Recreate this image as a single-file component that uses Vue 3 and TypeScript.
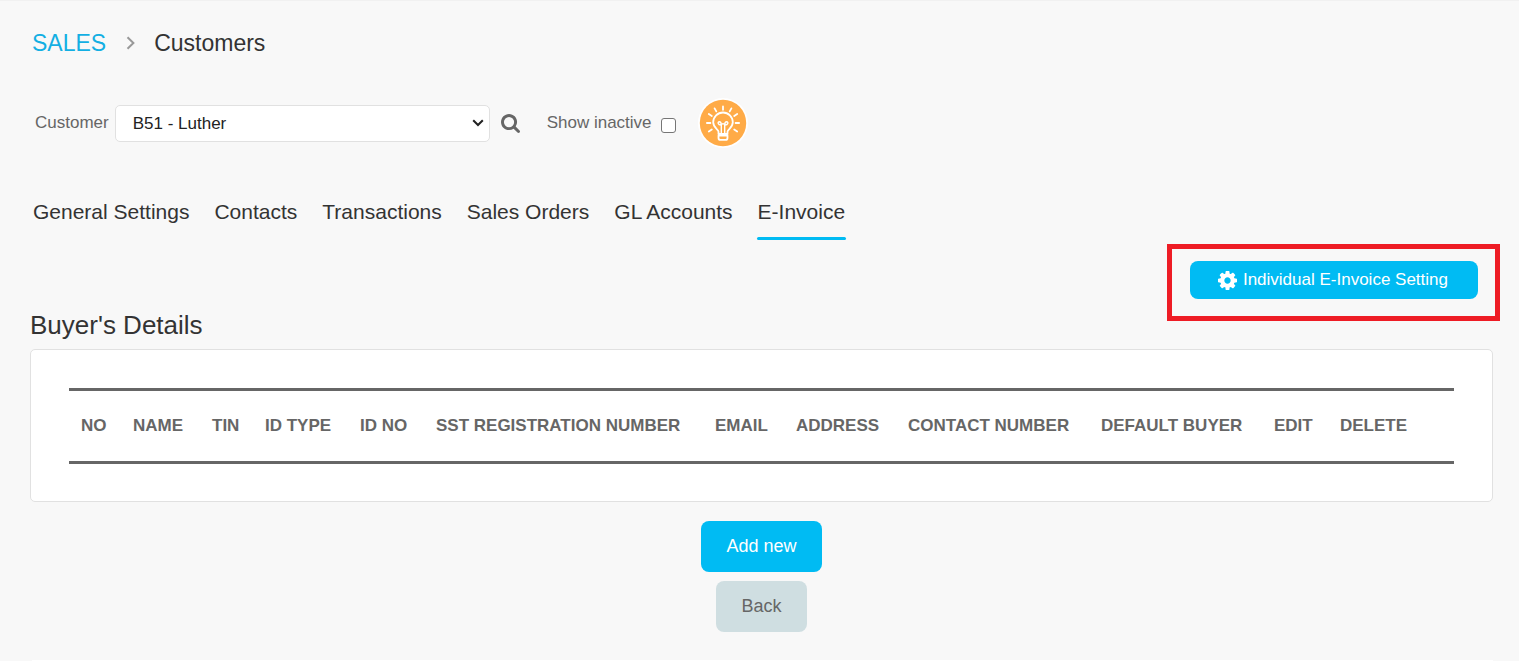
<script setup lang="ts">
import { ref } from 'vue'

interface Column {
  label: string
  width?: number
}

const customer = ref('B51')
const showInactive = ref(false)
const activeTab = ref('E-Invoice')

const tabs: string[] = [
  'General Settings',
  'Contacts',
  'Transactions',
  'Sales Orders',
  'GL Accounts',
  'E-Invoice',
]

const columns: Column[] = [
  { label: 'NO', width: 52 },
  { label: 'NAME', width: 79 },
  { label: 'TIN', width: 53 },
  { label: 'ID TYPE', width: 95 },
  { label: 'ID NO', width: 76 },
  { label: 'SST REGISTRATION NUMBER', width: 279 },
  { label: 'EMAIL', width: 81 },
  { label: 'ADDRESS', width: 112 },
  { label: 'CONTACT NUMBER', width: 193 },
  { label: 'DEFAULT BUYER', width: 173 },
  { label: 'EDIT', width: 66 },
  { label: 'DELETE' },
]
</script>

<template>
  <main class="page">
    <nav class="crumbs" aria-label="Breadcrumb">
      <a href="#">SALES</a>
      <svg class="chevron" viewBox="0 0 10 14" aria-hidden="true">
        <path d="M1.5 1.2 7.4 7l-5.9 5.8" />
      </svg>
      <h1>Customers</h1>
    </nav>

    <form class="filters" @submit.prevent>
      <label for="customer">Customer</label>
      <div class="select-box">
        <select id="customer" v-model="customer">
          <option value="B51">B51 - Luther</option>
        </select>
        <svg class="caret" viewBox="0 0 12 8" aria-hidden="true">
          <path d="M1.2 1.2 6 6l4.800-4.800" />
        </svg>
      </div>
      <button class="icon-button search" type="submit" aria-label="Search">
        <svg viewBox="0 0 1664 1664" aria-hidden="true">
          <path d="M1152 704q0-185-131.500-316.500T704 256 387.500 387.500 256 704t131.500 316.500T704 1152t316.500-131.500T1152 704zm512 832q0 52-38 90t-90 38q-54 0-90-38l-343-342q-179 124-399 124-143 0-273.500-55.500t-225-150-150-225T0 704t55.500-273.500 150-225 225-150T704 0t273.500 55.500 225 150 150 225T1408 704q0 220-124 399l343 343q37 37 37 90z" />
        </svg>
      </button>
      <label class="inactive" for="inactive">Show inactive</label>
      <input id="inactive" v-model="showInactive" type="checkbox" />
      <button class="icon-button tips" type="button" aria-label="Tips">
        <svg viewBox="0 0 50 50" aria-hidden="true">
          <circle cx="25" cy="25" r="25" fill="#fff" />
          <circle cx="25" cy="25" r="23.200" fill="#ffab47" />
          <g fill="none" stroke="#fff" stroke-width="1.800" stroke-linecap="round" stroke-linejoin="round">
            <path d="M20.500 36v-2.300c0-2.200-5.300-4-5.300-9.400a9.800 9.800 0 0 1 19.600 0c0 5.400-5.300 7.200-5.300 9.400V36z" />
            <path d="M20.500 37.500h9v2.400c0 1.300-.8 2-2 2h-5c-1.200 0-2-.7-2-2z" />
            <path d="M23.300 35.500V27M26.700 35.500V27M23.300 27c-3.600.2-3.900-3.200-2-3.200 1.600 0 2 1.500 2 3.200 1-1.800 2.400-1.800 3.400 0 0-1.700.4-3.200 2-3.200 1.900 0 1.600 3.400-2 3.200" stroke-width="1.400" />
            <path d="M25 11.800V8.400M18.300 13.400l-1.700-3M31.700 13.400l1.700-3M13.800 18l-3-2M36.200 18l3-2M12.400 25H8.900M37.600 25h3.500M13.800 31.500l-3 2M36.200 31.500l3 2" />
          </g>
        </svg>
      </button>
    </form>

    <nav class="tabs" aria-label="Customer sections">
      <a
        v-for="tab in tabs"
        :key="tab"
        href="#"
        :class="{ active: tab === activeTab }"
        @click.prevent="activeTab = tab"
      >{{ tab }}</a>
    </nav>

    <div class="actions">
      <div class="highlighted">
        <button class="setting" type="button">
          <svg viewBox="0 0 1536 1536" aria-hidden="true">
            <path d="M1024 768q0-106-75-181t-181-75-181 75-75 181 75 181 181 75 181-75 75-181zm512-109v222q0 12-8 23t-20 13l-185 28q-19 54-39 91 35 50 107 138 10 12 10 25t-9 23q-27 37-99 108t-94 71q-12 0-26-9l-138-108q-44 23-91 38-16 136-29 186-7 28-36 28H657q-14 0-24.500-8.500T621 1506l-28-184q-49-16-90-37l-141 107q-10 9-25 9-14 0-25-11-126-114-165-168-7-10-7-23 0-12 8-23 15-21 51-66.500t54-70.500q-27-50-41-99L29 913q-13-2-21-12.500T0 877V655q0-12 8-23t19-13l186-28q14-46 39-92-40-57-107-138-10-12-10-24 0-10 9-23 26-36 98.500-107.500T337 135q13 0 26 10l138 107q44-23 91-38 16-136 29-186 7-28 36-28h222q14 0 24.500 8.500T915 30l28 184q49 16 90 37l142-107q9-9 24-9 13 0 25 10 129 119 165 170 7 8 7 22 0 12-8 23-15 21-51 66.500t-54 70.500q26 50 41 98l183 28q13 2 21 12.500t8 23.500z" />
          </svg>
          Individual E-Invoice Setting
        </button>
      </div>
    </div>

    <h2>Buyer's Details</h2>
    <section class="card">
      <table>
        <colgroup>
          <col
            v-for="column in columns"
            :key="column.label"
            :style="{ width: column.width ? `${column.width}px` : 'auto' }"
          />
        </colgroup>
        <thead>
          <tr>
            <th v-for="column in columns" :key="column.label" scope="col">{{ column.label }}</th>
          </tr>
        </thead>
      </table>
    </section>

    <div class="buttons">
      <button class="primary" type="button">Add new</button>
      <button class="secondary" type="button">Back</button>
    </div>
    <div class="next-panel"></div>
  </main>
</template>

<style>
body {
  margin: 0;
  background: #f8f8f8;
}
</style>

<style scoped>
.page {
  box-sizing: border-box;
  padding: 28px 26px 0 30px;
  border-top: 1px solid #f1f1f1;
  color: #666;
  background: #f8f8f8;
  font-family: "Liberation Sans", Arial, sans-serif;
  font-size: 17px;
}

button,
select {
  font: inherit;
}

button {
  border: 0;
  cursor: pointer;
}

a {
  color: inherit;
  text-decoration: none;
}

.crumbs {
  display: flex;
  align-items: center;
  padding-left: 2px;
  font-size: 23px;
  line-height: 28px;
}

.crumbs a {
  color: #13afe3;
}

.crumbs h1 {
  margin: 0;
  color: #333;
  font-size: inherit;
  font-weight: 400;
}

.chevron {
  width: 10px;
  height: 14px;
  margin: 0 18px 0 20px;
  fill: none;
  stroke: #999;
  stroke-width: 2;
}

.filters {
  display: flex;
  align-items: center;
  margin-top: 41px;
  padding-left: 5px;
}

.select-box {
  display: grid;
  align-items: center;
  width: 375px;
  margin-left: 6px;
}

.select-box > * {
  grid-area: 1 / 1;
}

select {
  width: 100%;
  height: 37px;
  padding: 0 30px 0 17px;
  border: 1px solid #e1e1e1;
  border-radius: 5px;
  color: #222;
  background: #fff;
  appearance: none;
}

.caret {
  justify-self: end;
  width: 12px;
  height: 8px;
  margin-right: 6px;
  fill: none;
  stroke: #222;
  stroke-width: 2;
  pointer-events: none;
}

.icon-button {
  display: flex;
  padding: 0;
  background: none;
}

.search {
  margin-left: 11px;
}

.search svg {
  width: 19px;
  height: 19px;
  fill: #666;
}

.inactive {
  margin-left: 27px;
}

input[type="checkbox"] {
  width: 15px;
  height: 15px;
  margin: 4px 0 0 9px;
  border: 1px solid #767676;
  border-radius: 3px;
  background: #fff;
  appearance: none;
}

input[type="checkbox"]:checked {
  background: #00bbf3;
}

.tips {
  margin-left: 22px;
  border-radius: 50%;
}

.tips svg {
  width: 50px;
  height: 50px;
}

.tabs {
  display: flex;
  gap: 23px;
  margin-top: 49px;
  padding-left: 2px;
  color: #333;
  font-size: 21px;
  line-height: 30px;
}

.tabs a {
  position: relative;
  padding: 0 1px 13px;
  white-space: nowrap;
}

.tabs a.active::after {
  content: "";
  position: absolute;
  right: 0;
  bottom: 0;
  left: 0;
  height: 3px;
  border-radius: 2px;
  background: #00bbf3;
}

.actions {
  display: flex;
  justify-content: flex-end;
  margin-top: 21px;
  padding-right: 15px;
}

.highlighted {
  position: relative;
}

.highlighted::after {
  content: "";
  position: absolute;
  inset: -17px -22px -22px -23px;
  border: 5px solid #ee1c25;
  pointer-events: none;
}

.setting {
  display: flex;
  align-items: center;
  gap: 6px;
  height: 38px;
  padding: 0 30px 0 28px;
  border-radius: 8px;
  color: #fff;
  background: #00bbf3;
}

.setting svg {
  width: 19px;
  height: 19px;
  fill: #fff;
}

h2 {
  margin: 9px 0 7px;
  color: #333;
  font-size: 26px;
  font-weight: 400;
  line-height: 34px;
}

.card {
  padding: 38px 38px 37px;
  border: 1px solid #e1e1e1;
  border-radius: 5px;
  background: #fff;
}

table {
  width: 100%;
  border-collapse: separate;
  border-spacing: 0;
  border-top: 3px solid #666;
  border-bottom: 3px solid #666;
  table-layout: fixed;
}

th {
  height: 70px;
  padding: 0 0 0 12px;
  text-align: left;
  white-space: nowrap;
}

.buttons {
  display: flex;
  flex-direction: column;
  align-items: center;
  gap: 9px;
  margin-top: 19px;
}

.buttons button {
  height: 51px;
  padding: 0 25px;
  border-radius: 8px;
  font-size: 18px;
}

.primary {
  color: #fff;
  background: #00bbf3;
}

.secondary {
  color: #666;
  background: #cfdee1;
}

.next-panel {
  height: 1px;
  margin: 28px 0 0 2px;
  background: #fff;
}
</style>
